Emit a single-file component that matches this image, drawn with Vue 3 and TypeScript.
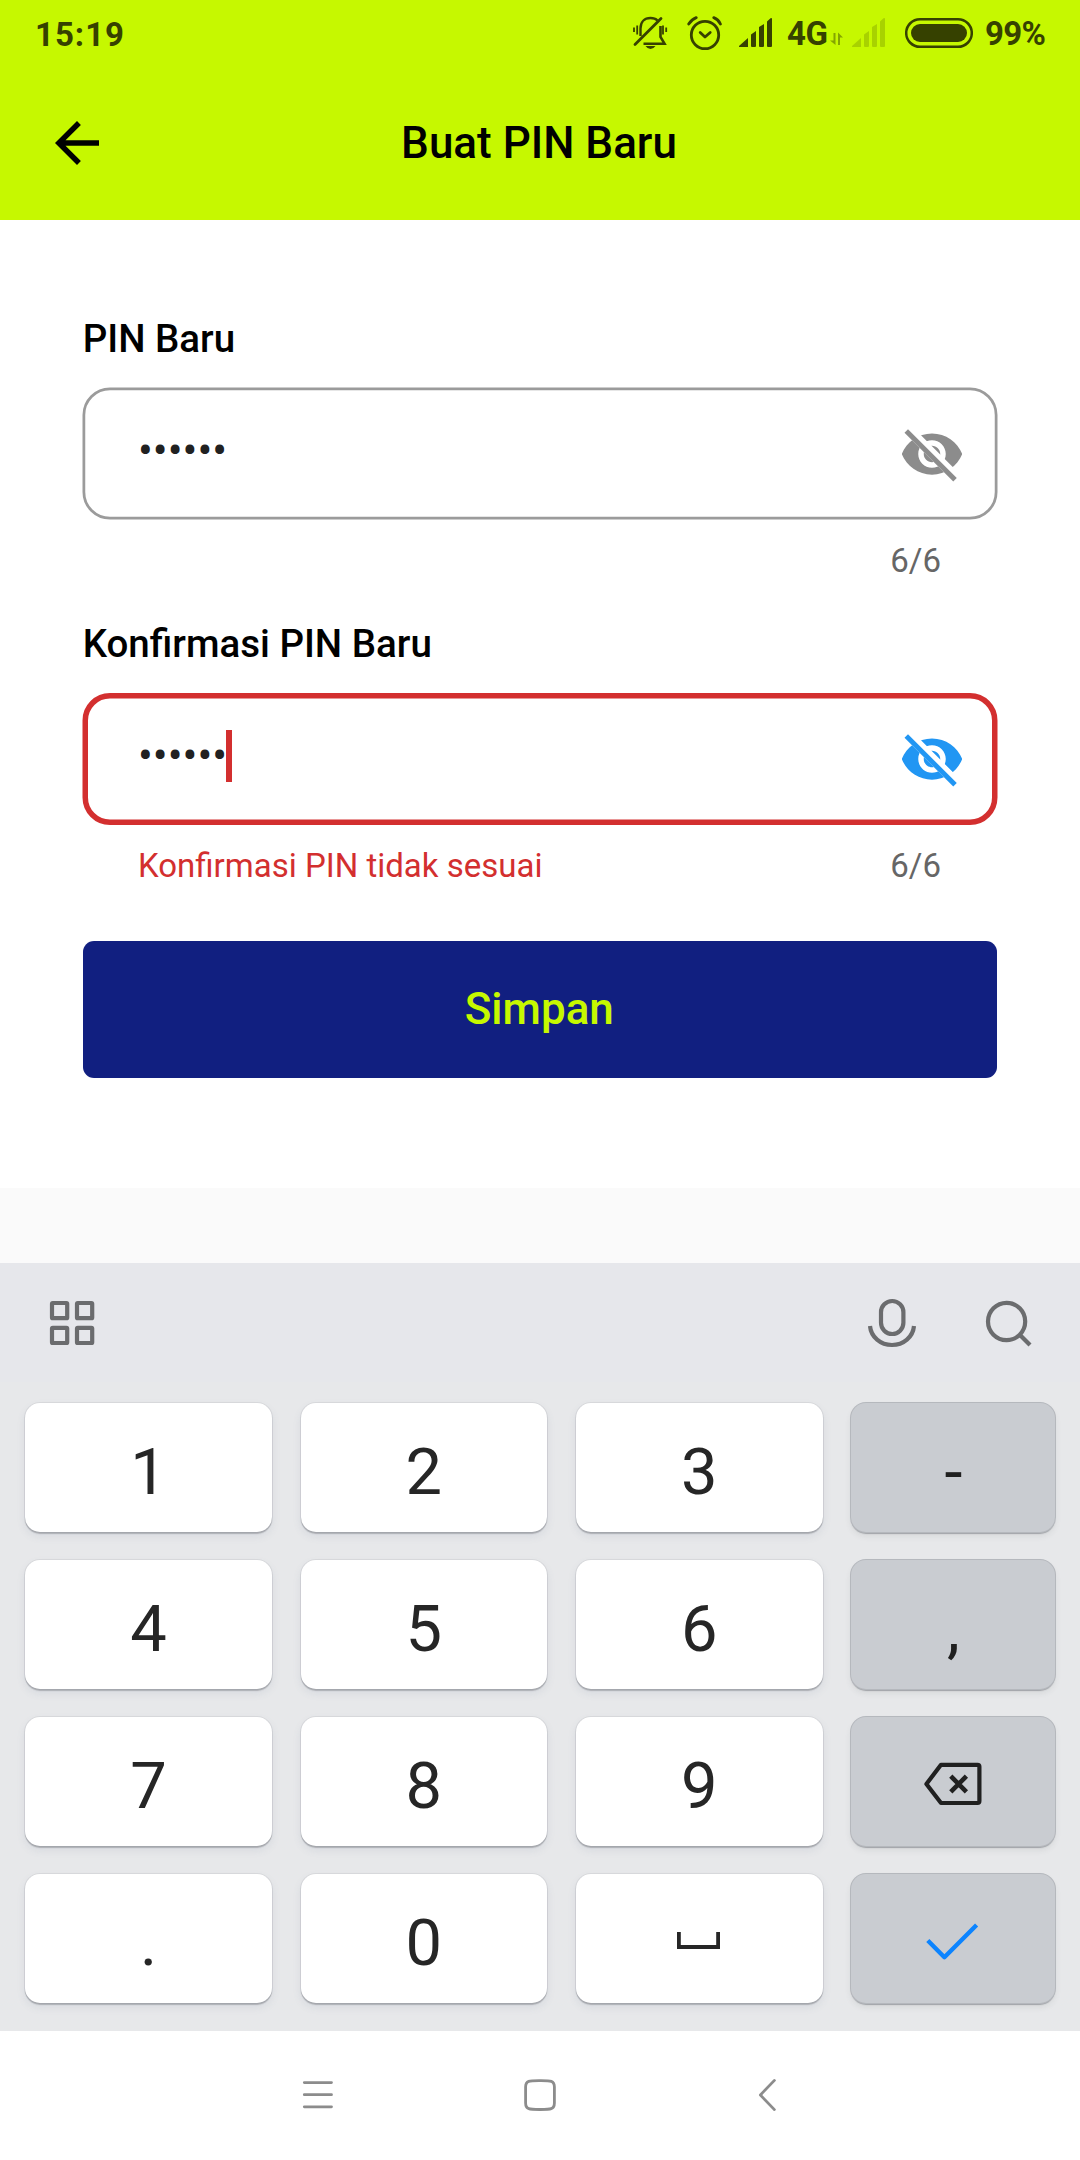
<script setup lang="ts">
interface PinField {
  label: string
  error: string
  caret: boolean
  top: number
  stroke: number
}

interface Key {
  label: string
  kind: 'char' | 'space' | 'delete' | 'done'
  side: boolean
}

const fields: PinField[] = [
  { label: 'PIN Baru', error: '', caret: false, top: 0.5, stroke: 2.75 },
  { label: 'Konfirmasi PIN Baru', error: 'Konfirmasi PIN tidak sesuai', caret: true, top: 0, stroke: 5.5 },
]

const char = (label: string, side = false): Key => ({ label, kind: 'char', side })

const keys: Key[] = [
  char('1'), char('2'), char('3'), char('-', true),
  char('4'), char('5'), char('6'), char(',', true),
  char('7'), char('8'), char('9'), { label: '', kind: 'delete', side: true },
  char('.'), char('0'), { label: '', kind: 'space', side: false }, { label: '', kind: 'done', side: true },
]
</script>

<template>
  <div class="screen">
    <header class="header">
      <div class="status">
        <span class="clock">15:19</span>
        <div class="status-icons">
          <svg class="bell" width="36" height="36" viewBox="632 15 36 36" fill="none" stroke="currentColor">
            <path d="M640.5 36V28.5C640.5 22 644.5 18 650.5 18C653.5 18 656 19 657.5 20.5" stroke-width="2.4" />
            <path d="M660.5 26V37L664.5 43.7H643.5" stroke-width="2.6" />
            <path d="M635 44.5L661 18.5" stroke-width="2.8" stroke-linecap="round" />
            <path d="M645.5 46H655.5Q653.5 49 650.5 49T645.5 46Z" fill="currentColor" stroke="none" />
            <path d="M634 27.5V32M637.2 25.5V34.5M663 25.5V34.5M666.2 27.5V32" stroke-width="1.8" />
          </svg>
          <svg class="alarm" width="36" height="36" viewBox="687 15 36 36" fill="none" stroke="currentColor" stroke-linecap="round">
            <circle cx="705" cy="35" r="13.7" stroke-width="2.8" />
            <path d="M700.2 32.5L705 37L710.2 32.5" stroke-width="2.8" stroke-linejoin="round" />
            <path d="M688.7 24Q691.5 19.5 696.2 17.6M713.8 17.6Q718.5 19.5 720.4 24" stroke-width="2.8" />
          </svg>
          <svg class="signal" width="34" height="32" viewBox="739 17 34 32" fill="currentColor">
            <path d="M739 46L748 38V47H740Q738.5 47 739 46ZM751 34.5L756 31V46Q756 47 755 47H752Q751 47 751 46ZM759 27L764 24V46Q764 47 763 47H760Q759 47 759 46ZM767 21.5L770.5 18.3Q772 17.5 772 19V46Q772 47 771 47H768Q767 47 767 46Z" />
          </svg>
          <span class="network">4G</span>
          <svg class="arrows" width="14" height="14" viewBox="830 33 14 14" fill="currentColor">
            <path d="M833.5 34H835.5V46L830 41.5H833.5ZM838 46V33.5L843 38.5H840V46Z" />
          </svg>
          <svg class="signal faint" width="34" height="32" viewBox="739 17 34 32" fill="currentColor">
            <path d="M739 46L748 38V47H740Q738.5 47 739 46ZM751 34.5L756 31V46Q756 47 755 47H752Q751 47 751 46ZM759 27L764 24V46Q764 47 763 47H760Q759 47 759 46ZM767 21.5L770.5 18.3Q772 17.5 772 19V46Q772 47 771 47H768Q767 47 767 46Z" />
          </svg>
          <svg class="battery" width="68" height="32" viewBox="905 17 68 32">
            <rect x="906.2" y="19.2" width="65.6" height="27.6" rx="13.8" fill="none" stroke="currentColor" stroke-width="2.5" />
            <rect x="911" y="24" width="56" height="18" rx="9" fill="currentColor" />
          </svg>
          <span class="percent">99%</span>
        </div>
      </div>
      <div class="appbar">
        <svg class="back" width="66" height="66" viewBox="0 0 24 24">
          <path d="M20 11H7.83l5.59-5.59L12 4l-8 8 8 8 1.41-1.41L7.83 13H20v-2z" />
        </svg>
        <h1>Buat PIN Baru</h1>
      </div>
    </header>

    <main class="form">
      <section v-for="field in fields" :key="field.label" class="field" :class="{ invalid: field.error }">
        <label>{{ field.label }}</label>
        <div class="box">
          <svg class="outline" width="916" height="133" fill="none">
            <rect
              :x="0.5 + field.stroke / 2"
              :y="field.top + field.stroke / 2"
              :width="915 - field.stroke"
              :height="132 - field.stroke"
              :rx="27.5 - field.stroke / 2"
              stroke="currentColor"
              :stroke-width="field.stroke"
            />
          </svg>
          <span class="dots">••••••</span>
          <i v-if="field.caret" class="caret"></i>
          <svg class="eye" width="66" height="66" viewBox="0 0 24 24" fill="currentColor">
            <clipPath id="eye-cut">
              <path d="M1 4.27H2L19.73 22V23H1ZM4.54 1.73L22.27 19.46H23V1H4.54Z" />
            </clipPath>
            <path
              clip-path="url(#eye-cut)"
              d="M12 4.5C7 4.5 2.73 7.61 1 12c1.73 4.39 6 7.5 11 7.5s9.27-3.11 11-7.5c-1.73-4.39-6-7.5-11-7.5zM12 17c-2.76 0-5-2.24-5-5s2.24-5 5-5 5 2.24 5 5-2.24 5-5 5zm0-8c-1.66 0-3 1.34-3 3s1.34 3 3 3 3-1.34 3-3-1.34-3-3-3z"
            />
            <path d="M2 4.27L3.27 3L21 20.73L19.73 22Z" />
          </svg>
        </div>
        <div class="helper">
          <span class="error">{{ field.error }}</span>
          <span class="counter">6/6</span>
        </div>
      </section>
      <button class="save" type="button">Simpan</button>
    </main>

    <section class="keyboard">
      <div class="toolbar">
        <svg class="apps" width="46" height="46" viewBox="49 1300 46 46" fill="none" stroke="currentColor" stroke-width="4.2">
          <rect x="52" y="1303" width="15.2" height="15.2" rx="0.8" />
          <rect x="77" y="1303" width="15.2" height="15.2" rx="0.8" />
          <rect x="52" y="1327.8" width="15.2" height="15.2" rx="0.8" />
          <rect x="77" y="1327.8" width="15.2" height="15.2" rx="0.8" />
        </svg>
        <svg class="mic" width="50" height="50" viewBox="867 1298 50 50" fill="none" stroke="currentColor" stroke-width="4.2">
          <rect x="881" y="1301" width="22.4" height="33" rx="11.2" />
          <path d="M870 1326C871 1337 880.5 1345 892 1345S913 1337 914 1326" />
        </svg>
        <svg class="search" width="48" height="50" viewBox="985 1298 48 50" fill="none" stroke="currentColor" stroke-width="4.2">
          <circle cx="1006.6" cy="1321.5" r="18.6" />
          <path d="M1020 1335L1030 1345" />
        </svg>
      </div>
      <div class="keys">
        <div v-for="(key, i) in keys" :key="i" class="key" :class="{ side: key.side }">
          <span v-if="key.kind === 'char'">{{ key.label }}</span>
          <svg v-else-if="key.kind === 'delete'" class="delete" width="60" height="46" viewBox="923 1761 60 46" fill="none" stroke="#202020" stroke-width="4.2">
            <path d="M941 1764.8H977.5Q979.4 1764.8 979.4 1766.7V1801Q979.4 1803 977.5 1803H941L926.4 1784Z" stroke-linejoin="round" />
            <path d="M950.8 1776.2L966.4 1791.8M966.4 1776.2L950.8 1791.8" stroke-width="4.6" />
          </svg>
          <svg v-else-if="key.kind === 'space'" class="space" width="44" height="20" viewBox="678 1931 44 20" fill="none" stroke="#262626" stroke-width="3.8">
            <path d="M679.9 1932V1947H719.1V1932" />
          </svg>
          <svg v-else class="done" width="54" height="40" viewBox="927 1922 54 40" fill="none" stroke="#0c84ff" stroke-width="4.4">
            <path d="M928.8 1940.5L945.4 1957.2L977.6 1925" stroke-linejoin="round" />
          </svg>
        </div>
      </div>
    </section>

    <nav class="nav">
      <svg width="34" height="36" viewBox="301 2077 34 36" stroke="currentColor" stroke-width="2.8" stroke-linecap="round">
        <path d="M304.3 2082.6H331.5M304.3 2094.7H331.5M304.3 2106.8H331.5" />
      </svg>
      <svg width="34" height="36" viewBox="523 2077 34 36" fill="none" stroke="currentColor" stroke-width="2.8">
        <path d="M540 2080.6C550.5 2080.6 554.4 2080.4 554.4 2087V2103C554.4 2109.6 550.5 2109.5 540 2109.5S525.6 2109.6 525.6 2103V2087C525.6 2080.4 529.5 2080.6 540 2080.6Z" />
      </svg>
      <svg width="20" height="36" viewBox="757 2077 20 36" fill="none" stroke="currentColor" stroke-width="2.8" stroke-linecap="round">
        <path d="M774.4 2080.4L760.4 2095L774.4 2109.6" stroke-linejoin="round" />
      </svg>
    </nav>
  </div>
</template>

<style>
body {
  margin: 0;
  background: #fff;
}
</style>

<style scoped>
.screen {
  display: flex;
  flex-direction: column;
  width: 1080px;
  height: 2160px;
  overflow: hidden;
  background: #fafafa;
  font-family: Roboto, "Liberation Sans", sans-serif;
}
svg {
  display: block;
  flex: none;
}
.header {
  height: 220px;
  background: #c6f800;
}
.status {
  display: flex;
  justify-content: space-between;
  align-items: center;
  height: 66px;
  padding: 0 36px 0 35px;
  color: #364100;
  font-size: 33px;
  font-weight: 700;
}
.clock {
  letter-spacing: 1px;
  margin-top: 2px;
}
.status-icons {
  display: flex;
  align-items: center;
}
.alarm {
  margin-left: 19px;
}
.signal {
  margin-left: 16px;
}
.network {
  width: 43px;
  margin: 1px 0 0 14px;
  letter-spacing: -0.5px;
}
.arrows {
  margin: 12px 0 0;
  opacity: 0.45;
}
.signal.faint {
  margin-left: 8px;
  opacity: 0.2;
}
.battery {
  margin-left: 19px;
}
.percent {
  width: 59px;
  margin: 1px 0 0 12px;
  letter-spacing: -0.7px;
  white-space: nowrap;
}
.appbar {
  display: grid;
  grid-template-columns: 66px 1fr 66px;
  align-items: center;
  height: 154px;
  padding: 0 46px 0 44px;
}
h1 {
  margin: 0;
  text-align: center;
  font-size: 44px;
  font-weight: 500;
}
.form {
  box-sizing: border-box;
  height: 968px;
  padding: 96px 82px 0;
  background: #fff;
}
.field {
  height: 306px;
  color: #9b9b9b;
}
.field.invalid {
  color: #d32f2f;
}
label {
  display: block;
  height: 71px;
  padding-left: 0.7px;
  line-height: 45px;
  color: #000;
  font-size: 38.5px;
  font-weight: 500;
}
.invalid label {
  line-height: 43px;
}
.box {
  position: relative;
  display: flex;
  align-items: center;
  box-sizing: border-box;
  height: 133px;
  padding: 0 33.5px 0 56px;
}
.outline {
  position: absolute;
  inset: 0;
}
.dots {
  color: #212121;
  font-size: 44px;
  line-height: 52px;
  margin-top: -6px;
}
.invalid .dots {
  margin-top: -8px;
}
.caret {
  width: 5.5px;
  height: 52px;
  margin: -7px 0 0 -0.8px;
  background: #d32f2f;
}
.eye {
  margin-left: auto;
  color: #8c8c8c;
}
.invalid .eye {
  color: #2196f3;
  margin-top: -1px;
}
.helper {
  display: flex;
  justify-content: space-between;
  margin-top: 21px;
  padding: 0 57px 0 56px;
  font-size: 33px;
  line-height: 39px;
}
.invalid .helper {
  margin-top: 20px;
}
.counter {
  color: #666;
}
.save {
  display: block;
  width: 914.4px;
  height: 137px;
  margin: 13px 0 0 0.6px;
  padding: 0 1px 1px 0;
  border: 0;
  border-radius: 11px;
  background: #111f80;
  color: #c6f800;
  font: 500 44px Roboto, "Liberation Sans", sans-serif;
}
.keyboard {
  height: 768px;
  margin-top: 75px;
  background: #e7e8ea;
}
.toolbar {
  display: flex;
  align-items: center;
  height: 119px;
  padding: 0 47px 0 49px;
  background: #e6e7eb;
  color: #6b6c6e;
}
.mic {
  margin-left: auto;
}
.search {
  margin-left: 68px;
}
.keys {
  display: grid;
  grid-template-columns: 246.6px 246.6px 246.6px 204px;
  grid-auto-rows: 129px;
  gap: 28px 28.8px;
  padding: 21px 0 0 25.2px;
}
.key {
  display: flex;
  align-items: center;
  justify-content: center;
  border-radius: 15px;
  background: #fff;
  box-shadow: 0 0 0 1px rgba(60, 64, 72, 0.08), 0 2px 1px rgba(60, 64, 72, 0.28), 0 4px 8px rgba(90, 110, 140, 0.12);
  color: #262626;
  font-size: 65px;
}
.key.side {
  background: #c9ccd1;
  box-shadow: 0 0 0 1px #b5b8bd, 0 2px 1px rgba(60, 64, 72, 0.35), 0 4px 6px rgba(60, 64, 72, 0.1);
  color: #202020;
}
.key span {
  line-height: 77px;
  margin-top: 9px;
}
.delete {
  margin-top: 4px;
}
.space {
  margin-top: 5px;
}
.done {
  margin-top: 7px;
}
.nav {
  box-sizing: border-box;
  display: flex;
  align-items: center;
  height: 129px;
  padding: 0 0 2px 301px;
  background: #fff;
  color: #8c8c8c;
}
.nav svg + svg {
  margin-left: 188px;
}
.nav svg:last-child {
  margin-left: 200px;
}
</style>
